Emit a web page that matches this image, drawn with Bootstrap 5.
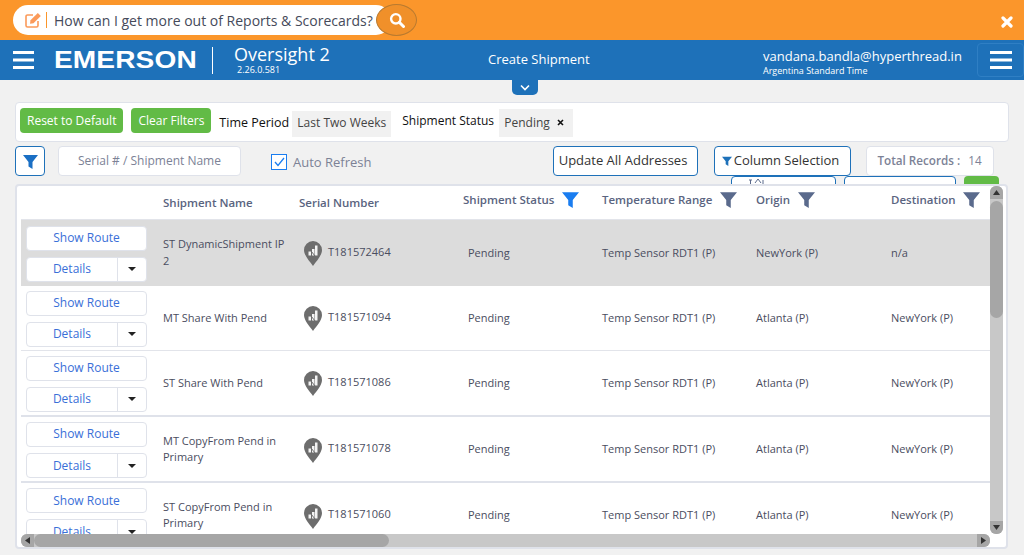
<!DOCTYPE html>
<html lang="en">
<head>
<meta charset="utf-8">
<title>Oversight 2</title>
<link href="https://cdn.jsdelivr.net/npm/bootstrap@5.3.0/dist/css/bootstrap.min.css" rel="stylesheet">
<style>
html,body{height:555px;overflow:hidden}
body{background:#f1f1f1;font-family:"Open Sans","Noto Sans",sans-serif;color:#46495c;position:relative}
.ask-bar{height:40px;background:#fb962b;padding:5px 0 0 13px}
.ask-pill{height:30px;width:378px;background:#fff;border-radius:15px;position:relative;padding-left:12px;font-size:14px;color:#454a5a}
.ask-sep{width:1px;height:16px;background:#fb962b;margin:0 7px 0 4px}
.ask-go{position:absolute;left:363px;top:-1px;width:41px;height:32px;border-radius:50%;background:#f0902a;border:1px solid #b87a30;display:flex;align-items:center;justify-content:center}
.ask-close{position:absolute;left:1001px;top:16px;line-height:0}
.top-bar{height:40px;background:#1e71b9;color:#fff;position:relative}
.burger-l{margin-left:13px;width:21px;line-height:0}
.logo-word{font-family:"Liberation Sans",sans-serif;font-weight:700;font-size:24px;line-height:1;width:143px;margin-left:20px;transform:scaleX(1.17);transform-origin:left center;white-space:nowrap;letter-spacing:.1px}
.logo-sep{width:1px;height:27px;background:#fff;margin-left:15px}
.app-name{margin-left:21px;width:254px}
.app-title{font-size:18px;line-height:20px;margin-top:-1px}
.app-ver{font-size:9px;line-height:10px;margin:1px 0 0 3px}
.page-title{font-size:13px;width:110px}
.user-box{margin-left:165px;width:214px;padding-top:5px}
.user-mail{font-size:13px;line-height:17px}
.user-tz{font-size:9px;line-height:12px}
.burger-r{position:absolute;left:977px;top:3px;width:47px;height:34px;border:1px solid #2f7fc4;border-radius:4px;display:flex;align-items:center;justify-content:center}
.tab-drop{position:absolute;left:512px;top:80px;width:26px;height:15px;background:#1e71b9;border-radius:0 0 5px 5px;display:flex;align-items:center;justify-content:center}
.filter-panel{margin:22px 15px 0 15px;height:40px;background:#fff;border:1px solid #dfe2ea;border-radius:4px;padding:0 4px;font-size:12px;width:994px}
.btn-lime{background:#62bb46;color:#fff;border:0;border-radius:4px;height:25px;font-size:12px;padding:0 7px;line-height:25px;margin-top:-4px}
.filter-label{color:#111;font-size:12px}
.label-time{font-size:12.5px;margin-top:2px;margin-left:8px;width:67px;white-space:nowrap}
.label-status{margin-left:11px;margin-top:-2px;font-weight:500;width:92px;white-space:nowrap}
.filter-chip{background:#f1f1f1;height:26px;line-height:24px;padding:0 5px;font-size:12px;color:#444}
.chip-time{margin-left:6px;margin-top:3px}
.chip-status{margin-left:5px;height:28px;margin-top:1px;width:74px}
.tool-row{height:30px;margin-top:4px;padding-left:15px;position:relative;font-size:13px}
.btn-funnel{width:30px;height:30px;border:1px solid #1e71b9;background:#fff;border-radius:4px;padding:0;display:flex;align-items:center;justify-content:center}
.serial-box{width:183px;height:30px;border:1px solid #dfe2ea;border-radius:4px;background:#fff;margin-left:13px;text-align:center;line-height:28px;font-size:12px;color:#7c8296}
.auto-box{width:16px;height:16px;border:1px solid #1a7df0;background:#fff;margin:2px 0 0 30px;display:flex;align-items:center;justify-content:center}
.auto-text{font-size:13px;color:#7c8296;margin:3px 0 0 6px}
.btn-outline-blue{height:30px;border:1px solid #1e71b9;background:#fff;border-radius:4px;font-size:13px;color:#333;padding:0;display:flex;align-items:center;justify-content:center}
.w-update{width:145px;margin-left:181px;padding-right:4px}
.w-column{width:137px;margin-left:16px;padding-right:3px}
.fn-gap{margin-right:2px}
.total-box{width:128px;height:30px;margin-left:15px;border:1px solid #dfe2ea;border-radius:4px;background:#fff;font-size:11.7px;color:#7c8296;display:flex;align-items:center;justify-content:center}
.peek-row{height:8px;overflow:hidden;position:relative;padding-left:731px}
.peek-a{width:105px;height:20px;border:1px solid #1e71b9;border-radius:4px;background:#fff;padding-left:16px;line-height:0}
.peek-b{width:112px;height:20px;border:1px solid #1e71b9;border-radius:4px;background:#fff;margin-left:8px}
.peek-c{width:35px;height:20px;background:#62bb46;border-radius:4px;margin-left:8px}
.grid-card{margin-left:15px;width:993px;height:365px;background:#fff;border:2px solid #dfe2ea;border-radius:4px;padding-left:4px;position:relative;overflow:hidden}
.ship-table{table-layout:fixed;width:969px;border-collapse:collapse;font-size:11px;color:#4a4d60}
.ship-table th{height:33px;font-size:11.5px;font-weight:600;color:#5a6480;padding:0 0 0 8px;vertical-align:middle;white-space:nowrap;border-bottom:1px solid #e2e4ea}
.ship-table td{padding:0 0 0 8px;vertical-align:middle;border-bottom:1px solid #e2e4ea;line-height:16.5px}
.ship-table td.act{padding:2px 0 0 5px}
.ship-table tr.thick td{border-bottom:2px solid #dfe2ea}
.ship-table tr.sel td{background:#dcdcdc;border-bottom:0}
.th-shift{position:relative;top:-3px}
.th-flt{margin-left:8px;vertical-align:-4px}
.cell-status{padding-left:13px!important}
.act-btn{width:121px;height:25px;background:#fff;border:1px solid #dfe2ea;border-radius:4px;color:#3a6fd8;font-size:12px;display:flex;align-items:center;justify-content:center;padding:0}
.act-split{width:121px;height:25px;background:#fff;border:1px solid #dfe2ea;border-radius:4px;margin-top:6px;display:flex;color:#3a6fd8;font-size:12px;line-height:1}
.act-main{flex:1;display:flex;align-items:center;justify-content:center;border-right:1px solid #dfe2ea}
.act-caret{width:28px;display:flex;align-items:center;justify-content:center}
.caret-shape{width:0;height:0;border-left:4px solid transparent;border-right:4px solid transparent;border-top:4px solid #222}
.pin-wrap{margin-left:5px;margin-right:6px;line-height:0;position:relative;top:1px}
.serial-text{position:relative;top:-1px}
.bar-v{position:absolute;left:973px;top:0;width:13px;height:348px;background:#c8c8c8;border-radius:6px}
.bar-v-thumb{position:absolute;left:0;top:15px;width:13px;height:117px;background:#a6a6a6;border-radius:7px}
.bar-h{position:absolute;left:4px;top:348px;width:969px;height:13px;background:#c8c8c8;border-radius:6px}
.bar-h-thumb{position:absolute;left:13px;top:0;width:355px;height:13px;background:#a6a6a6;border-radius:7px}
.bar-end{position:absolute;display:flex;align-items:center;justify-content:center;background:#a6a6a6;width:13px;height:13px}
.end-up{left:0;top:0;border-radius:6px 6px 0 0}
.end-down{left:0;bottom:0;border-radius:0 0 6px 6px}
.end-left{left:0;top:0;border-radius:6px 0 0 6px}
.end-right{right:0;top:0;border-radius:0 6px 6px 0}
</style>
</head>
<body>
<svg width="0" height="0" class="position-absolute" aria-hidden="true"><defs>
  <symbol id="funnel" viewBox="0 0 15 15"><path d="M0 1h15L9.500 8v7l-4-2.500V8z"/></symbol>
  <symbol id="pin" viewBox="0 0 18 25"><path d="M9 0a9 9 0 0 1 9 9c0 5.500-5.500 11-9 16C5.500 20 0 14.500 0 9a9 9 0 0 1 9-9z" fill="#6d6d6d"/><path d="M4.500 14.500v-4H7v4zM8 14.500V8h2.500v6.500zM11 14.500V4.500h2.500v10z" fill="#f4f4f4"/><path d="m3.500 5.500 7.500 9.500" stroke="#6d6d6d" stroke-width="1"/></symbol>
</defs></svg>
<div class="ask-bar">
  <div class="ask-pill d-flex align-items-center">
    <svg width="17" height="16" viewBox="0 0 17 16" aria-hidden="true"><path d="M8 3H2.500A1.500 1.500 0 0 0 1 4.500v9A1.500 1.500 0 0 0 2.500 15h9a1.500 1.500 0 0 0 1.500-1.500V9" fill="none" stroke="#fb9a5a" stroke-width="1.600"/><path d="M5.500 8.200 12.800 1l3 3-7.300 7.200-3.500.6z" fill="#fb9a5a"/></svg>
    <span class="ask-sep"></span>
    <span>How can I get more out of Reports &amp; Scorecards?</span>
    <span class="ask-go"><svg width="16" height="16" viewBox="0 0 16 16" aria-hidden="true"><circle cx="6.800" cy="6.800" r="4.700" fill="none" stroke="#fff" stroke-width="2.400"/><path d="m10.300 10.300 4.200 4.200" stroke="#fff" stroke-width="3" stroke-linecap="round"/></svg></span>
  </div>
  <span class="ask-close"><svg width="12" height="12" viewBox="0 0 12 12" aria-hidden="true"><path d="m2 2 8 8M10 2l-8 8" stroke="#fff" stroke-width="3.200" stroke-linecap="round"/></svg></span>
</div>
<div class="top-bar d-flex align-items-center">
  <span class="burger-l"><svg width="21" height="18" viewBox="0 0 21 18" aria-hidden="true"><path d="M0 1.500h21M0 9h21M0 16.500h21" stroke="#fff" stroke-width="3"/></svg></span>
  <div class="logo-word">EMERSON</div>
  <span class="logo-sep"></span>
  <div class="app-name"><div class="app-title">Oversight 2</div><div class="app-ver">2.26.0.581</div></div>
  <div class="page-title">Create Shipment</div>
  <div class="user-box"><div class="user-mail">vandana.bandla@hyperthread.in</div><div class="user-tz">Argentina Standard Time</div></div>
  <span class="burger-r"><svg width="22" height="18" viewBox="0 0 22 18" aria-hidden="true"><path d="M0 1.500h22M0 9h22M0 16.500h22" stroke="#fff" stroke-width="3"/></svg></span>
</div>
<span class="tab-drop"><svg width="10" height="7" viewBox="0 0 10 7" aria-hidden="true"><path d="m1 1.500 4 4 4-4" fill="none" stroke="#fff" stroke-width="1.600"/></svg></span>
<div class="filter-panel d-flex align-items-center">
  <button class="btn-lime" type="button">Reset to Default</button>
  <button class="btn-lime ms-2" type="button">Clear Filters</button>
  <span class="filter-label label-time">Time Period</span>
  <span class="filter-chip chip-time">Last Two Weeks</span>
  <span class="filter-label label-status">Shipment Status</span>
  <span class="filter-chip chip-status d-flex align-items-center justify-content-between">Pending<svg class="me-1" width="7" height="7" viewBox="0 0 7 7" aria-hidden="true"><path d="m1 1 5 5M6 1 1 6" stroke="#111" stroke-width="1.600"/></svg></span>
</div>
<div class="tool-row d-flex align-items-center">
  <button class="btn-funnel" type="button" aria-label="Filter"><svg width="15" height="15" fill="#1a6fc4" aria-hidden="true"><use href="#funnel"/></svg></button>
  <div class="serial-box">Serial # / Shipment Name</div>
  <span class="auto-box"><svg width="11" height="10" viewBox="0 0 11 10" aria-hidden="true"><path d="m1 5 3 3.500 6-7.500" fill="none" stroke="#1a7df0" stroke-width="1.300"/></svg></span>
  <span class="auto-text">Auto Refresh</span>
  <button class="btn-outline-blue w-update" type="button">Update All Addresses</button>
  <button class="btn-outline-blue w-column" type="button"><svg class="fn-gap" width="10" height="10" fill="#1e71b9" aria-hidden="true"><use href="#funnel"/></svg>Column Selection</button>
  <div class="total-box"><span class="fw-semibold">Total Records :</span><span class="ms-2">14</span></div>
</div>
<div class="peek-row d-flex">
  <span class="peek-a"><svg width="18" height="8" viewBox="0 0 18 8" aria-hidden="true"><path d="M1 3h3M2.500 3v4M7 6l3-4 3 4M15 3v4" fill="none" stroke="#5a6a8c" stroke-width="1"/></svg></span><span class="peek-b"></span><span class="peek-c"></span>
</div>
<div class="grid-card">
  <table class="ship-table">
    <colgroup><col style="width:134px"><col style="width:136px"><col style="width:164px"><col style="width:139px"><col style="width:154px"><col style="width:135px"><col style="width:107px"></colgroup>
    <thead><tr>
      <th></th><th>Shipment Name</th><th>Serial Number</th>
      <th><span class="th-shift">Shipment Status<svg class="th-flt" width="17" height="17" fill="#1a7df0" aria-hidden="true"><use href="#funnel"/></svg></span></th>
      <th><span class="th-shift">Temperature Range<svg class="th-flt" width="17" height="17" fill="#5a6a8c" aria-hidden="true"><use href="#funnel"/></svg></span></th>
      <th><span class="th-shift">Origin<svg class="th-flt" width="17" height="17" fill="#5a6a8c" aria-hidden="true"><use href="#funnel"/></svg></span></th>
      <th><span class="th-shift">Destination<svg class="th-flt" width="17" height="17" fill="#5a6a8c" aria-hidden="true"><use href="#funnel"/></svg></span></th>
    </tr></thead>
    <tbody>
      <tr class="sel" style="height:67px">
        <td class="act"><button class="act-btn" type="button">Show Route</button><div class="act-split"><span class="act-main">Details</span><span class="act-caret"><i class="caret-shape"></i></span></div></td>
        <td>ST DynamicShipment IP 2</td>
        <td><div class="d-flex align-items-center"><span class="pin-wrap"><svg width="18" height="25" aria-hidden="true"><use href="#pin"/></svg></span><span class="serial-text">T181572464</span></div></td>
        <td class="cell-status">Pending</td><td>Temp Sensor RDT1 (P)</td><td>NewYork (P)</td><td>n/a</td>
      </tr>
      <tr style="height:64px">
        <td class="act"><button class="act-btn" type="button">Show Route</button><div class="act-split"><span class="act-main">Details</span><span class="act-caret"><i class="caret-shape"></i></span></div></td>
        <td>MT Share With Pend</td>
        <td><div class="d-flex align-items-center"><span class="pin-wrap"><svg width="18" height="25" aria-hidden="true"><use href="#pin"/></svg></span><span class="serial-text">T181571094</span></div></td>
        <td class="cell-status">Pending</td><td>Temp Sensor RDT1 (P)</td><td>Atlanta (P)</td><td>NewYork (P)</td>
      </tr>
      <tr class="thick" style="height:66px">
        <td class="act"><button class="act-btn" type="button">Show Route</button><div class="act-split"><span class="act-main">Details</span><span class="act-caret"><i class="caret-shape"></i></span></div></td>
        <td>ST Share With Pend</td>
        <td><div class="d-flex align-items-center"><span class="pin-wrap"><svg width="18" height="25" aria-hidden="true"><use href="#pin"/></svg></span><span class="serial-text">T181571086</span></div></td>
        <td class="cell-status">Pending</td><td>Temp Sensor RDT1 (P)</td><td>Atlanta (P)</td><td>NewYork (P)</td>
      </tr>
      <tr class="thick" style="height:66px">
        <td class="act"><button class="act-btn" type="button">Show Route</button><div class="act-split"><span class="act-main">Details</span><span class="act-caret"><i class="caret-shape"></i></span></div></td>
        <td>MT CopyFrom Pend in Primary</td>
        <td><div class="d-flex align-items-center"><span class="pin-wrap"><svg width="18" height="25" aria-hidden="true"><use href="#pin"/></svg></span><span class="serial-text">T181571078</span></div></td>
        <td class="cell-status">Pending</td><td>Temp Sensor RDT1 (P)</td><td>Atlanta (P)</td><td>NewYork (P)</td>
      </tr>
      <tr style="height:66px">
        <td class="act"><button class="act-btn" type="button">Show Route</button><div class="act-split"><span class="act-main">Details</span><span class="act-caret"><i class="caret-shape"></i></span></div></td>
        <td>ST CopyFrom Pend in Primary</td>
        <td><div class="d-flex align-items-center"><span class="pin-wrap"><svg width="18" height="25" aria-hidden="true"><use href="#pin"/></svg></span><span class="serial-text">T181571060</span></div></td>
        <td class="cell-status">Pending</td><td>Temp Sensor RDT1 (P)</td><td>Atlanta (P)</td><td>NewYork (P)</td>
      </tr>
    </tbody>
  </table>
  <div class="bar-v"><span class="bar-end end-up"><svg width="7" height="5" viewBox="0 0 7 5" aria-hidden="true"><path d="M3.500 0 7 5H0z" fill="#333"/></svg></span><span class="bar-v-thumb"></span><span class="bar-end end-down"><svg width="7" height="5" viewBox="0 0 7 5" aria-hidden="true"><path d="M3.500 5 7 0H0z" fill="#333"/></svg></span></div>
  <div class="bar-h"><span class="bar-end end-left"><svg width="5" height="7" viewBox="0 0 5 7" aria-hidden="true"><path d="M0 3.500 5 0v7z" fill="#333"/></svg></span><span class="bar-h-thumb"></span><span class="bar-end end-right"><svg width="5" height="7" viewBox="0 0 5 7" aria-hidden="true"><path d="M5 3.500 0 0v7z" fill="#333"/></svg></span></div>
</div>
<script src="https://cdn.jsdelivr.net/npm/bootstrap@5.3.0/dist/js/bootstrap.bundle.min.js"></script>
</body>
</html>
